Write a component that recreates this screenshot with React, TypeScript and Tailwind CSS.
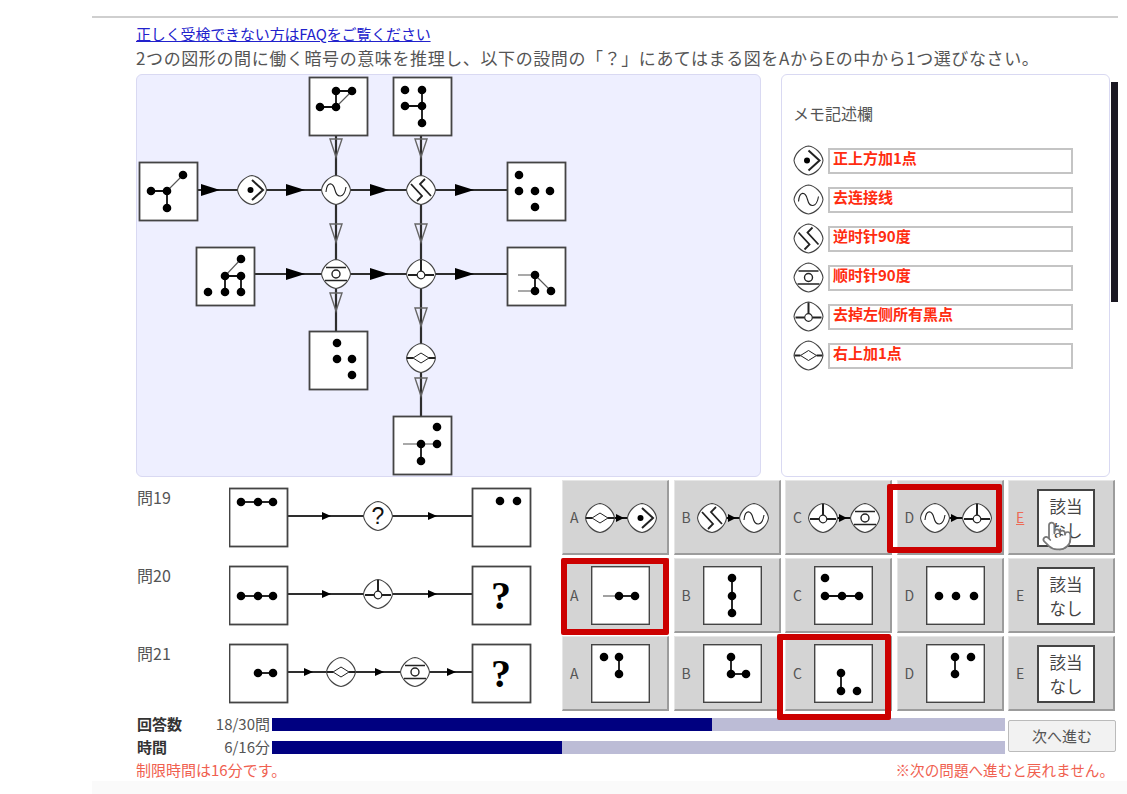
import { Pointer } from "lucide-react";
import type { ReactNode } from "react";

type Pt = [number, number];
type Kind = "chevron" | "wave" | "zigzag" | "bars" | "tri" | "diamond" | "ask";

type FigProps = { dots: Pt[]; lines?: [number, number, number, number][]; thin?: [number, number, number, number][]; x?: number; y?: number; children?: ReactNode };

const ink = "#2e2e2e";

const Fig = ({ dots, lines = [], thin = [], x = 0, y = 0, children }: FigProps) => (
  <g transform={`translate(${x} ${y})`}>
    <rect x="0.5" y="0.5" width="58" height="58" fill="#fff" stroke="#444" strokeWidth="1.8" />
    {thin.map((l, i) => (
      <line key={i} x1={l[0]} y1={l[1]} x2={l[2]} y2={l[3]} stroke="#555" strokeWidth="1.1" />
    ))}
    {lines.map((l, i) => (
      <line key={i} x1={l[0]} y1={l[1]} x2={l[2]} y2={l[3]} stroke="#111" strokeWidth="1.8" />
    ))}
    {dots.map((d, i) => (
      <circle key={i} cx={d[0]} cy={d[1]} r="4.3" fill="#000" />
    ))}
    {children}
  </g>
);

const Ask = () => (
  <text x="29" y="43" textAnchor="middle" fontFamily="'Liberation Serif', serif" fontWeight="700" fontSize="40" fill="#000">
    ?
  </text>
);

const Glyph = ({ kind, x, y }: { kind: Kind; x: number; y: number }) => (
  <g transform={`translate(${x} ${y})`} fill="none" stroke="#222" strokeWidth="1.5">
    <path d="M0,-14.5 C7,-13.5 13.5,-7 14.5,0 C13.5,7 7,13.5 0,14.5 C-7,13.5 -13.5,7 -14.5,0 C-13.5,-7 -7,-13.5 0,-14.5Z" fill="#fff" strokeWidth="1.1" stroke="#444" />
    {kind === "chevron" && (
      <>
        <circle cx="-1.5" cy="0" r="3" fill="#000" stroke="none" />
        <path d="M0,-10 L11,0 L0,10" strokeWidth="2" />
      </>
    )}
    {kind === "wave" && <path d="M-10,2 C-9,-9 -3,-8 -1,0 C1,8 8,9 10,-3" strokeWidth="1.1" />}
    {kind === "zigzag" && <path d="M-10,-6 L1,6 L-4,11 M10,6 L-1,-6 L4,-11" strokeWidth="1.8" />}
    {kind === "bars" && (
      <>
        <path d="M-10,-6.5 H10 M-11,6.5 H11" strokeWidth="1.5" />
        <circle cx="0" cy="0" r="4" strokeWidth="1.4" />
      </>
    )}
    {kind === "tri" && (
      <>
        <path d="M0,-14 V-3 M-13,1 H-4 M4,1 H13" strokeWidth="2" />
        <circle cx="0" cy="1" r="3.8" strokeWidth="1.2" />
      </>
    )}
    {kind === "diamond" && (
      <>
        <path d="M-14,0 H-8 M8,0 H14" strokeWidth="2" />
        <path d="M-8,0 L0,-5 L8,0 L0,5Z" strokeWidth="1" />
      </>
    )}
    {kind === "ask" && (
      <text x="0" y="8" textAnchor="middle" fontFamily="'Liberation Sans', sans-serif" fontWeight="400" fontSize="23" fill="#111" stroke="none">
        ?
      </text>
    )}
  </g>
);

const SolidArrow = ({ x, y, w = 19, h = 12 }: { x: number; y: number; w?: number; h?: number }) => (
  <path d={`M${x},${y - h / 2} L${x + w},${y} L${x},${y + h / 2}Z`} fill="#000" />
);

const HollowArrow = ({ x, y }: { x: number; y: number }) => (
  <path d={`M${x - 6},${y} H${x + 6} L${x},${y + 18}Z`} fill="none" stroke="#666" strokeWidth="1.4" />
);

const Diagram = () => (
  <svg viewBox="137 75 623 401" className="w-[623px] h-[401px] block">
    <path d="M198,190 H507 M255,274 H507 M336,136 V331 M421,136 V416" stroke={ink} strokeWidth="2.2" fill="none" />
    {[201, 286, 370, 455].map((x) => (
      <SolidArrow key={x} x={x} y={190} />
    ))}
    {[286, 370, 455].map((x) => (
      <SolidArrow key={x} x={x} y={274} />
    ))}
    {[139, 224, 293].map((y) => (
      <HollowArrow key={y} x={336} y={y} />
    ))}
    {[139, 224, 308, 378].map((y) => (
      <HollowArrow key={y} x={421} y={y} />
    ))}
    <Glyph kind="chevron" x={252} y={190} />
    <Glyph kind="wave" x={336} y={190} />
    <Glyph kind="zigzag" x={421} y={190} />
    <Glyph kind="bars" x={336} y={274} />
    <Glyph kind="tri" x={421} y={274} />
    <Glyph kind="diamond" x={421} y={358} />
    <Fig x={309} y={77} dots={[[11, 30], [27, 30], [27, 14], [43, 14]]} lines={[[11, 30, 27, 30], [27, 30, 27, 14], [27, 14, 43, 14]]} thin={[[27, 30, 43, 14]]} />
    <Fig x={393} y={77} dots={[[12, 13], [29, 13], [12, 29], [29, 29], [29, 46]]} lines={[[29, 13, 29, 46], [12, 29, 29, 29]]} />
    <Fig x={139} y={162} dots={[[12, 29], [28, 29], [28, 46], [44, 13]]} lines={[[12, 29, 28, 29], [28, 29, 28, 46]]} thin={[[28, 29, 44, 13]]} />
    <Fig x={196} y={247} dots={[[12, 45], [29, 45], [45, 45], [29, 29], [45, 29], [45, 12]]} lines={[[29, 45, 29, 29], [45, 45, 45, 29], [29, 29, 45, 29]]} thin={[[29, 29, 45, 12]]} />
    <Fig x={507} y={162} dots={[[12, 13], [12, 29], [28, 29], [43, 29], [28, 45]]} />
    <Fig x={507} y={247} dots={[[28, 28], [28, 44], [44, 44]]} lines={[[28, 28, 28, 44]]} thin={[[11, 28, 28, 28], [11, 44, 28, 44], [28, 28, 44, 44]]} />
    <Fig x={309} y={331} dots={[[28, 12], [28, 28], [43, 28], [43, 44]]} />
    <Fig x={393} y={416} dots={[[44, 11], [28, 28], [44, 28], [28, 45]]} lines={[[28, 28, 28, 45]]} thin={[[10, 28, 44, 28]]} />
  </svg>
);

const memos: { kind: Kind; text: string }[] = [
  { kind: "chevron", text: "正上方加1点" },
  { kind: "wave", text: "去连接线" },
  { kind: "zigzag", text: "逆时针90度" },
  { kind: "bars", text: "顺时针90度" },
  { kind: "tri", text: "去掉左侧所有黑点" },
  { kind: "diamond", text: "右上加1点" },
];

const MemoRow = ({ kind, text }: { kind: Kind; text: string }) => (
  <div className="flex items-center h-[39px]">
    <svg viewBox="-15.5 -15.5 31 31" className="w-[31px] h-[31px] shrink-0">
      <Glyph kind={kind} x={0} y={0} />
    </svg>
    <div className="ml-[4px] w-[245px] h-[26px] border-2 border-[#c4c4c4] bg-white pl-[3px] text-[15px] leading-[15px] font-bold text-[#ff2c10] font-['Noto_Sans_CJK_SC',sans-serif]">
      {text}
    </div>
  </div>
);

const Strip = ({ nodes, arrows, left, right }: { nodes: [Kind, number][]; arrows: number[]; left: ReactNode; right: ReactNode }) => (
  <svg viewBox="0 0 303 75" className="w-[303px] h-[75px] shrink-0 block">
    <path d="M58,36 H244" stroke={ink} strokeWidth="2" fill="none" />
    {arrows.map((x) => (
      <SolidArrow key={x} x={x} y={36} w={9} h={8} />
    ))}
    {nodes.map(([k, x]) => (
      <Glyph key={x} kind={k} x={x} y={36} />
    ))}
    {left}
    {right}
  </svg>
);

const Box = ({ children }: { children: ReactNode }) => (
  <svg viewBox="0 0 59 59" className="w-[59px] h-[59px] shrink-0 block">
    {children}
  </svg>
);

const None = () => (
  <div className="w-[58px] h-[58px] shrink-0 bg-white border-2 border-[#444] flex items-center justify-center text-center text-[16.5px] leading-[24px] text-[#444]">
    該当
    <br />
    なし
  </div>
);

const Pair = ({ a, b }: { a: Kind; b: Kind }) => (
  <svg viewBox="0 0 72 30" className="w-[72px] h-[30px] shrink-0 block">
    <path d="M28,15 H44" stroke="#111" strokeWidth="2" />
    <SolidArrow x={31} y={15} w={8} h={8} />
    <Glyph kind={a} x={15} y={15} />
    <Glyph kind={b} x={57} y={15} />
  </svg>
);

type Opt = { letter: string; body: ReactNode; mark?: string; hot?: boolean; pair?: boolean };

const Choice = ({ letter, body, mark, hot, pair }: Opt) => (
  <div className="relative w-[107px] h-[75px] shrink-0 flex items-center pl-[7px] pt-[1px] bg-[#d4d4d4] border-t border-l border-t-[#e6e6e6] border-l-[#e6e6e6] border-r-2 border-b-2 border-r-[#9c9c9c] border-b-[#9c9c9c]">
    <span className={`${pair ? "w-[15px]" : "w-[21px]"} text-[14px] ${hot ? "text-[#ee6a55] underline" : "text-[#555]"}`}>{letter}</span>
    {body}
    {mark && <div className={`absolute border-[6px] border-[#cc0000] rounded-[2px] ${mark}`} />}
    {hot && <Pointer className="absolute left-[32px] top-[38px] w-[32px] h-[34px]" fill="#fff" stroke="#777" strokeWidth={1.3} />}
  </div>
);

const rows: { label: string; strip: ReactNode; options: Opt[] }[] = [
  {
    label: "問19",
    strip: (
      <Strip
        nodes={[["ask", 149]]}
        arrows={[93, 199]}
        left={<Fig y={8} dots={[[12, 14], [29, 14], [44, 14]]} lines={[[12, 14, 44, 14]]} />}
        right={<Fig x={243} y={8} dots={[[28, 13], [45, 13]]} />}
      />
    ),
    options: [
      { letter: "A", pair: true, body: <Pair a="diamond" b="chevron" /> },
      { letter: "B", pair: true, body: <Pair a="zigzag" b="wave" /> },
      { letter: "C", pair: true, body: <Pair a="tri" b="bars" /> },
      { letter: "D", pair: true, body: <Pair a="wave" b="tri" />, mark: "left-[-11px] right-[0px] top-[3px] bottom-[0px]" },
      { letter: "E", hot: true, body: <None /> },
    ],
  },
  {
    label: "問20",
    strip: (
      <Strip
        nodes={[["tri", 149]]}
        arrows={[93, 199]}
        left={<Fig y={8} dots={[[12, 30], [29, 30], [44, 30]]} lines={[[12, 30, 44, 30]]} />}
        right={<Fig x={243} y={8} dots={[]}><Ask /></Fig>}
      />
    ),
    options: [
      { letter: "A", mark: "left-[-2px] right-[-2px] top-[-1px] bottom-[-4px]", body: <Box><Fig dots={[[28, 30], [44, 30]]} lines={[[28, 30, 44, 30]]} thin={[[12, 30, 28, 30]]} /></Box> },
      { letter: "B", body: <Box><Fig dots={[[29, 12], [29, 30], [29, 47]]} lines={[[29, 12, 29, 47]]} /></Box> },
      { letter: "C", body: <Box><Fig dots={[[11, 12], [11, 30], [28, 30], [45, 30]]} lines={[[11, 30, 45, 30]]} /></Box> },
      { letter: "D", body: <Box><Fig dots={[[13, 30], [30, 30], [48, 30]]} /></Box> },
      { letter: "E", body: <None /> },
    ],
  },
  {
    label: "問21",
    strip: (
      <Strip
        nodes={[["diamond", 112], ["bars", 186]]}
        arrows={[75, 146, 218]}
        left={<Fig y={8} dots={[[29, 29], [44, 29]]} lines={[[29, 29, 44, 29]]} />}
        right={<Fig x={243} y={8} dots={[]}><Ask /></Fig>}
      />
    ),
    options: [
      { letter: "A", body: <Box><Fig dots={[[13, 13], [28, 13], [28, 30]]} lines={[[28, 13, 28, 30]]} /></Box> },
      { letter: "B", body: <Box><Fig dots={[[28, 13], [28, 30], [43, 30]]} lines={[[28, 13, 28, 30], [28, 30, 43, 30]]} /></Box> },
      { letter: "C", mark: "left-[-9px] right-[-1px] top-[-3px] bottom-[-11px]", body: <Box><Fig dots={[[27, 29], [27, 47], [43, 47]]} lines={[[27, 29, 27, 47]]} /></Box> },
      { letter: "D", body: <Box><Fig dots={[[29, 13], [29, 30], [45, 13]]} lines={[[29, 13, 29, 30]]} /></Box> },
      { letter: "E", body: <None /> },
    ],
  },
];

const Progress = ({ label, value, percent }: { label: string; value: string; percent: number }) => (
  <div className="flex items-center h-[13px]">
    <span className="w-[70px] pl-[1px] text-[15px] font-bold text-[#333]">{label}</span>
    <span className="w-[64px] text-right text-[15px] text-[#555] mr-[2px] whitespace-nowrap">{value}</span>
    <div className="w-[733px] h-[13px] bg-[#bcbcd6]">
      <div className="h-full bg-[#000080]" style={{ width: `${percent}%` }} />
    </div>
  </div>
);

const App = () => {
  return (
    <div className="w-[1127px] h-[794px] bg-white flex flex-col overflow-hidden font-['Noto_Sans_CJK_JP','Liberation_Sans',sans-serif]">
      <div className="h-[781px] pt-[16px] shrink-0">
        <div className="ml-[92px] w-[1026px] border-t-2 border-[#cfcfcf] pl-[44px]">
          <a href="#" className="block mt-[6px] text-[15px] tracking-[-0.15px] leading-[20px] text-[#2222cc] underline">
            正しく受検できない方はFAQをご覧ください
          </a>
          <p className="mt-[2px] text-[17px] tracking-[0.6px] leading-[24px] text-[#555] whitespace-nowrap">
            2つの図形の間に働く暗号の意味を推理し、以下の設問の「？」にあてはまる図をAからEの中から1つ選びなさい。
          </p>
          <div className="mt-[4px] flex items-start">
            <div className="w-[625px] h-[403px] bg-[#eeefff] border border-[#d9d9f2] rounded-[6px] overflow-hidden">
              <Diagram />
            </div>
            <div className="ml-[20px] w-[329px] h-[403px] bg-white border border-[#d9d9f2] rounded-[6px] pl-[11px] pt-[27px]">
              <div className="text-[16px] leading-[22px] text-[#555] mb-[17px]">メモ記述欄</div>
              {memos.map((m) => (
                <MemoRow key={m.text} kind={m.kind} text={m.text} />
              ))}
            </div>
            <div className="ml-[1px] mt-[8px] w-[7px] h-[220px] bg-[#1a1822]" />
          </div>
          <div className="mt-[3px]">
            {rows.map((r) => (
              <div key={r.label} className="flex h-[78px]">
                <div className="w-[93px] pl-[1px] pt-[7px] text-[16px] leading-[20px] text-[#555]">{r.label}</div>
                <div className="mr-[30px]">{r.strip}</div>
                <div className="flex gap-[4.5px]">
                  {r.options.map((o) => (
                    <Choice key={o.letter} {...o} />
                  ))}
                </div>
              </div>
            ))}
          </div>
          <div className="flex mt-[4px]">
            <div className="flex flex-col gap-[10px]">
              <Progress label="回答数" value="18/30問" percent={60} />
              <Progress label="時間" value="6/16分" percent={39.5} />
            </div>
            <button className="ml-[3px] mt-[2px] w-[108px] h-[32px] bg-[#f2f2f2] border border-[#bbb] rounded-[2px] text-[15px] text-[#555]">
              次へ進む
            </button>
          </div>
          <div className="mt-[7px] w-[978px] flex items-center justify-between text-[#f0604f]">
            <span className="text-[15px] leading-[18px]">制限時間は16分です。</span>
            <span className="text-[14.6px] leading-[18px]">※次の問題へ進むと戻れません。</span>
          </div>
        </div>
      </div>
      <div className="ml-[92px] flex-1 bg-[#fafafa]" />
    </div>
  );
};

export default App;
